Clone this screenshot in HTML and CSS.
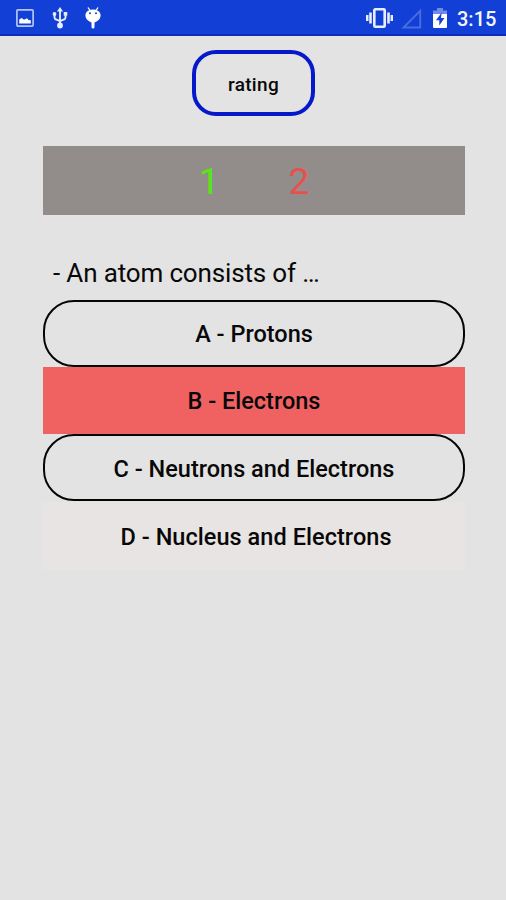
FILE: index.html
```html
<!DOCTYPE html>
<html lang="en">
<head>
<meta charset="utf-8">
<title>Quiz</title>
<link rel="stylesheet" href="styles.css">
</head>
<body>
<header class="status">
  <div class="status-left">
    <svg class="icon-image" width="18" height="18" viewBox="0 0 18 18"><rect x=".9" y=".9" width="16.2" height="16.2" rx="1" fill="none" stroke="#b5c4f5" stroke-width="1.700"/><path d="M3.200 14.500V10.500l2.500-1.500 2.300 1.700 3-1.500 1.500 1.800 2.300.300V14.500z" fill="#fff"/></svg>
    <svg class="icon-usb" width="16" height="22" viewBox="0 0 16 22"><path d="M8 3v15M2.500 7v3.500q0 1.500 1.500 2l4 1.700 4-1.700q1.500-.500 1.500-2V7" fill="none" stroke="#e8edff" stroke-width="1.900"/><path d="M8 0l3 4.500H5z" fill="#e8edff"/><circle cx="2.500" cy="7" r="1.900" fill="#e8edff"/><rect x="11.700" y="5" width="3.600" height="3.600" fill="#e8edff"/><circle cx="8" cy="18.500" r="2.900" fill="#e8edff"/></svg>
    <svg class="icon-debug" width="16" height="22" viewBox="0 0 16 22"><path d="M3 .5l2 3M13 .5l-2 3" stroke="#fff" stroke-width="1.300"/><path d="M.5 7Q2 2.500 8 2.500T15.500 7Q16 11 13 13.500 11 15.200 9.500 15.500V20a1.500 1.500 0 0 1-3 0V15.500Q5 15.200 3 13.500 0 11 .5 7z" fill="#fff"/><circle cx="5" cy="6.200" r="1" fill="#123fd6"/><circle cx="11" cy="6.200" r="1" fill="#123fd6"/></svg>
  </div>
  <div class="status-right">
    <svg class="icon-vibrate" width="27" height="20" viewBox="0 0 27 20"><rect x="8.300" y="1.300" width="10.400" height="17.400" rx="1" fill="none" stroke="#e8edff" stroke-width="2.600"/><path d="M1.200 7v6M4.500 4.500v11M22.500 4.500v11M25.800 7v6" stroke="#e8edff" stroke-width="2.600"/></svg>
    <svg class="icon-signal" width="21" height="21" viewBox="0 0 21 21"><path d="M2.500 19.500H19.200V2.800z" fill="none" stroke="#496ce1" stroke-width="1.900"/></svg>
    <svg class="icon-battery" width="14" height="20" viewBox="0 0 14 20"><path d="M4 0h6v2.500h4V8H0V2.500h4z" fill="#6f8be9"/><path d="M0 6h14v13q0 1-1 1H1q-1 0-1-1z" fill="#fff"/><path d="M8.700 4.500L3 12.200h3.300v5.300L11.500 10H8z" fill="#123fd6"/></svg>
    <span class="clock">3:15</span>
  </div>
</header>
<main class="screen">
  <button class="rating">rating</button>
  <section class="score"><span class="right">1</span><span class="wrong">2</span></section>
  <p class="question">- An atom consists of …</p>
  <div class="answers">
    <button class="answer">A - Protons</button>
    <button class="answer picked">B - Electrons</button>
    <button class="answer third">C - Neutrons and Electrons</button>
    <button class="answer plain">D - Nucleus and Electrons</button>
  </div>
</main>
</body>
</html>
```

FILE: styles.css
```css
* { box-sizing: border-box; }
body {
  margin: 0;
  height: 900px;
  overflow: hidden;
  background: #e3e3e3;
  color: #080808;
  font-family: Roboto, sans-serif;
}
button {
  margin: 0;
  padding: 0;
  background: none;
  color: inherit;
  font-family: inherit;
  font-weight: 500;
}
svg { display: block; flex: none; }
.status {
  display: flex;
  justify-content: space-between;
  height: 36px;
  padding: 0 10px 0 16px;
  background: #123fd6;
  border-bottom: 2px solid #0c2cc0;
}
.status-left, .status-right { display: flex; align-items: center; height: 36px; }
.icon-usb { margin-left: 18px; }
.icon-debug { margin-left: 17px; }
.icon-signal { margin-left: 8px; }
.icon-battery { margin-left: 11px; }
.clock {
  width: 39px;
  margin-left: 10px;
  padding-top: 2px;
  color: #f4f6ff;
  font-size: 20px;
  font-weight: 500;
  line-height: 36px;
  white-space: nowrap;
}
.screen {
  display: flex;
  flex-direction: column;
  padding: 14px 41px 0 43px;
}
.rating {
  align-self: center;
  width: 123px;
  height: 66px;
  margin-right: 1px;
  padding-top: 2px;
  border: 4px solid #0519cb;
  border-radius: 24px;
  font-size: 19px;
  letter-spacing: .3px;
}
.score {
  display: flex;
  justify-content: center;
  gap: 69px;
  height: 69px;
  margin-top: 30px;
  background: #928d8b;
  font-size: 37px;
  line-height: 72px;
}
.right { color: #54e911; }
.wrong { color: #e8504e; }
.question {
  margin: 43px 0 11px 10px;
  font-size: 26px;
  line-height: 31px;
  letter-spacing: -.15px;
}
.answers { display: grid; grid-template-rows: 67px 67px 68px 68px; }
.answer {
  height: 67px;
  padding-top: 1px;
  border: 2px solid #050505;
  border-radius: 31px;
  font-size: 23.5px;
}
.picked { padding-top: 1px; border: 0; border-radius: 0; background: #f06262; }
.third { padding-top: 3px; }
.plain {
  height: 68px;
  padding-left: 4px;
  border: 0;
  border-radius: 0;
  background: #e8e4e3;
  letter-spacing: .05px;
}
```
